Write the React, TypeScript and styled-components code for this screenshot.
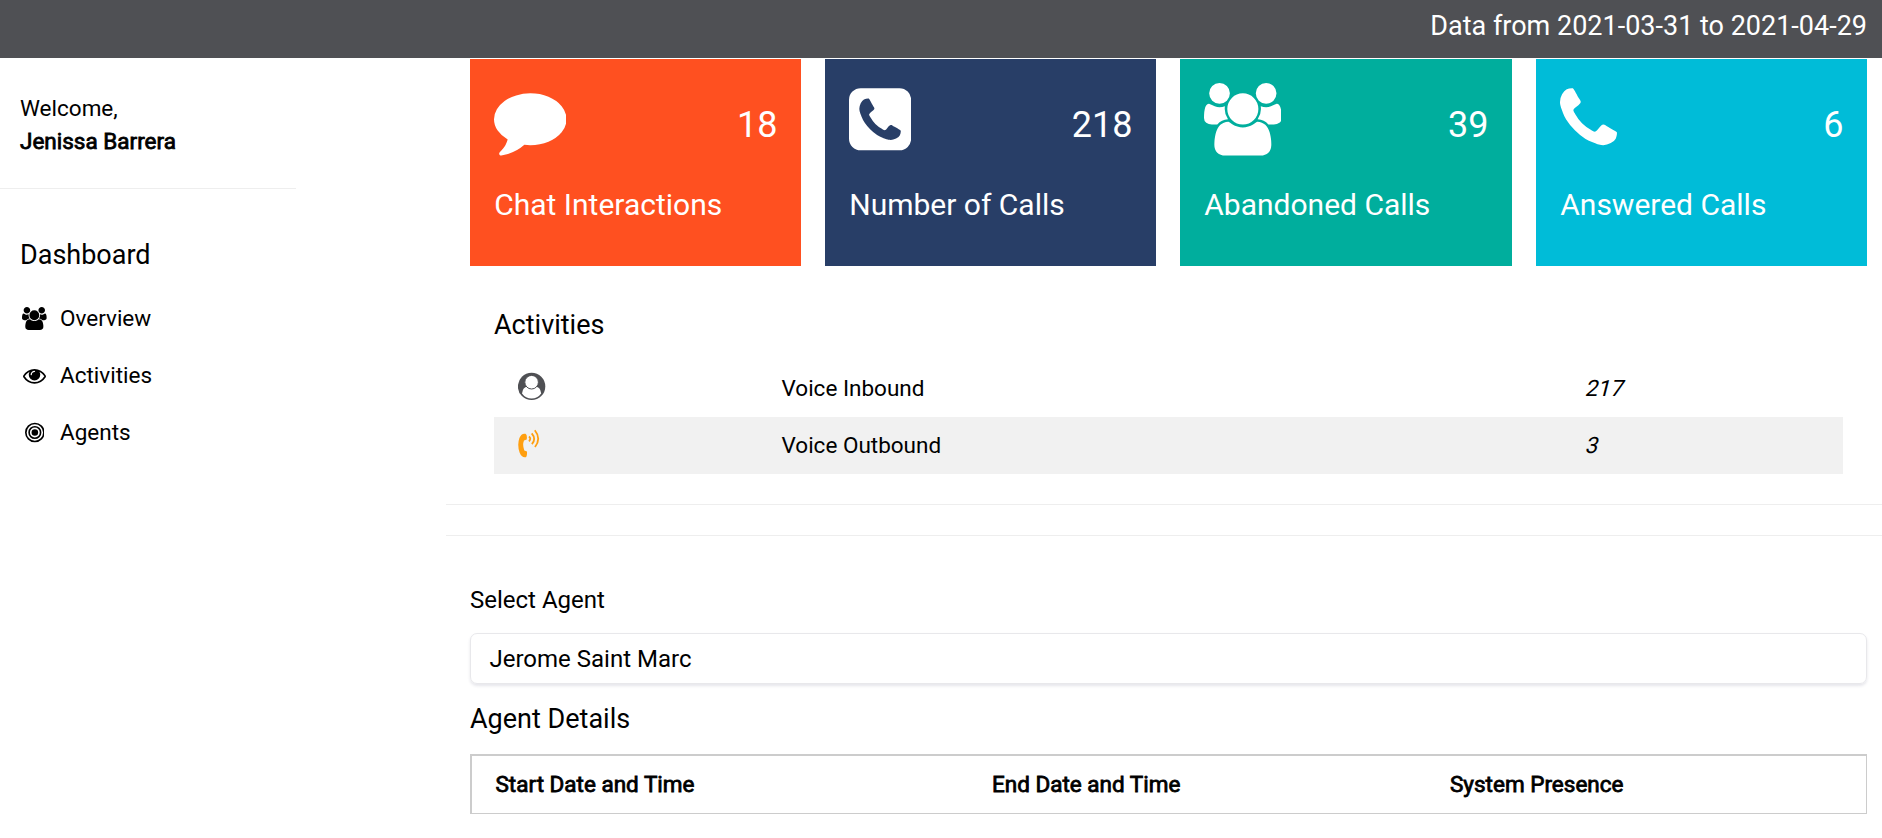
import React from "react";
import styled, { createGlobalStyle } from "styled-components";

const GlobalStyle = createGlobalStyle`
  *, *::before, *::after { box-sizing: border-box; }
  html, body { margin: 0; overflow: hidden; background: #fff; }
  body { font-family: Roboto, "Liberation Sans", sans-serif; font-size: 22.5px; line-height: 33.75px; color: #000; }
`;

const Page = styled.div`
  display: flex;
  flex-direction: column;
  height: 838px;
`;
const TopBar = styled.header`
  height: 58px;
  flex: none;
  background: #4f5054;
  color: #fff;
  font-size: 27px;
  line-height: 40px;
  padding: 6px 15px 0;
  text-align: right;
`;
const Body = styled.div`
  display: flex;
  flex: 1;
  min-height: 0;
`;
const Sidebar = styled.nav`
  width: 446px;
  flex: none;
`;
const Greeting = styled.div`
  width: 296px;
  height: 131px;
  padding: 34px 20px 0;
  line-height: 33px;
  border-bottom: 1px solid #eee;
`;
const Strong = styled.span`
  -webkit-text-stroke: 0.8px currentColor;
`;
const SideTitle = styled.h5`
  margin: 46px 20px 15px;
  font-size: 27px;
  line-height: 40px;
  font-weight: 400;
`;
const SideLink = styled.a`
  display: flex;
  align-items: center;
  height: 57px;
  padding-left: 19.5px;
  gap: 10.5px;
`;
const SideIcon = styled.span`
  display: flex;
  justify-content: center;
  width: 30px;
`;
const Main = styled.main`
  flex: 1;
  min-width: 0;
`;
const Cards = styled.section`
  display: grid;
  grid-template-columns: 331px 331px 332px 331px;
  gap: 24px;
  padding: 1px 15px 0 24px;
`;
const Card = styled.article<{ $color: string }>`
  height: 207px;
  background: ${(p) => p.$color};
  color: #fff;
  padding: 24px 23.5px 0 24.25px;
`;
const CardTop = styled.div`
  display: flex;
  justify-content: space-between;
  height: 99px;
  svg { margin-left: -0.75px; }
`;
const Count = styled.div`
  font-size: 36px;
  line-height: 54px;
  padding-top: 15px;
`;
const CardTitle = styled.h4`
  margin: 0;
  font-size: 30px;
  line-height: 45px;
  font-weight: 400;
`;
const Activities = styled.section`
  height: 239px;
  padding: 39px 39px 0 48px;
  border-bottom: 1px solid #eee;
`;
const Heading = styled.h5`
  margin: 0;
  font-size: 27px;
  line-height: 40px;
  font-weight: 400;
`;
const Table = styled.div`
  margin-top: 15px;
`;
const ActivityRow = styled.div<{ $shaded?: boolean }>`
  display: grid;
  grid-template-columns: 263.5px 800px 1fr;
  height: 57px;
  padding: 12px 0 0 24px;
  background: ${(p) => (p.$shaded ? "#f1f1f1" : "transparent")};
`;
const RowIcon = styled.div`
  height: 32px;
  svg { display: block; }
`;
const Slanted = styled.span`
  justify-self: start;
  transform: skewX(-14deg);
  transform-origin: 0 75%;
`;
const Spacer = styled.div`
  height: 31px;
  border-bottom: 1px solid #eee;
`;
const Agent = styled.section`
  padding: 47px 15px 0 24px;
`;
const Label = styled.div`
  font-size: 24px;
  line-height: 34px;
`;
const Select = styled.div`
  height: 51px;
  margin: 16px 0 15px;
  padding: 8px 18.5px;
  border: 1px solid #e8e8eb;
  border-radius: 7px;
  box-shadow: 0 2px 3px rgba(50, 50, 93, 0.12);
  font-size: 24px;
  line-height: 34px;
`;
const DetailHeader = styled.div`
  display: grid;
  grid-template-columns: 496.5px 458px 1fr;
  height: 60px;
  margin-top: 15px;
  padding: 12px 0 0 23.5px;
  border: 1px solid #ccc;
  border-top-width: 2px;
  border-left-width: 2px;
`;

type IconName = "comment" | "square" | "users" | "phone" | "eye";
const shapes: Record<IconName, { x?: number; width: number; d: string }> = {
  comment: {
    width: 1792,
    d: "M1792 896q0 174-120 321.5t-326 233-450 85.5q-70 0-145-8-198 175-460 242-49 14-114 22-17 2-30.5-9t-17.5-29v-1q-3-4-.5-12t2-10 4.5-9.5l6-9 7-8.5 8-9q7-8 31-34.5t34.5-38 31-39.5 32.5-51 27-59 26-76q-157-89-247.5-220t-90.5-281q0-130 71-248.5t191-204.5 286-136.5 348-50.5q244 0 450 85.5t326 233 120 321.5z",
  },
  square: {
    x: 128,
    width: 1536,
    d: "M1408 1193q0-11-2-16t-18-16.5-40.5-25-47.5-26.5-45.5-25-28.5-15q-5-3-19-13t-25-15-21-5q-15 0-36.5 20.5t-39.5 45-38.5 45-33.5 20.5q-7 0-16.5-3.5t-15.5-6.5-17-9.5-14-8.5q-99-55-170-126.5t-127-170.5q-2-3-8.5-14t-9.5-17-6.5-15.5-3.5-16.5q0-13 20.5-33.5t45-38.5 45-39.5 20.5-36.5q0-10-5-21t-15-25-13-19q-3-6-15-28.5t-25-45.5-26.5-47.5-25-40.5-16.5-18-16-2q-48 0-101 22-46 21-80 94.5t-34 130.5q0 16 2.5 34t5 30.5 9 33 10 29.5 12.5 33 11 30q60 164 216.5 320.5t320.5 216.5q6 2 30 11t33 12.5 29.5 10 33 9 30.5 5 34 2.5q57 0 130.5-34t94.5-80q22-53 22-101zm256-777v960q0 119-84.5 203.5t-203.5 84.5h-960q-119 0-203.5-84.5t-84.5-203.5v-960q0-119 84.5-203.5t203.5-84.5h960q119 0 203.5 84.5t84.5 203.5z",
  },
  users: {
    width: 1920,
    d: "M593 896q-162 5-265 128H194q-82 0-138-40.5T0 865q0-353 124-353 6 0 43.5 21t97.5 42.5T384 597q67 0 133-23-5 37-5 66 0 139 81 256zm1071 637q0 120-73 189.5t-194 69.5H523q-121 0-194-69.5T256 1533q0-53 3.5-103.5t14-109T300 1212t43-97.5 62-81 85.5-53.5T602 960q10 0 43 21.5t73 48 107 48 135 21.5 135-21.5 107-48 73-48 43-21.5q61 0 111.5 20t85.5 53.5 62 81 43 97.5 26.5 108.5 14 109 3.5 103.5zM640 256q0 106-75 181t-181 75-181-75-75-181 75-181T384 0t181 75 75 181zm704 384q0 159-112.5 271.5T960 1024 688.5 911.5 576 640t112.5-271.5T960 256t271.5 112.5T1344 640zm576 225q0 78-56 118.5t-138 40.5h-134q-103-123-265-128 81-117 81-256 0-29-5-66 66 23 133 23 59 0 119-21.5t97.5-42.5 43.5-21q124 0 124 353zm-128-609q0 106-75 181t-181 75-181-75-75-181 75-181 181-75 181 75 75 181z",
  },
  phone: {
    width: 1792,
    d: "M1408 1240q0 27-10 70.5t-21 68.5q-21 50-122 106-94 51-186 51-27 0-52.5-3.5t-57.5-12.5-47.5-14.5-55.5-20.5-49-18q-98-35-175-83-128-79-264.5-215.5t-215.5-264.5q-48-77-83-175-3-9-18-49t-20.5-55.5-14.5-47.5-12.5-57.5-3.5-52.5q0-92 51-186 56-101 106-122 25-11 68.5-21t70.5-10q14 0 21 3 18 6 53 76 11 19 30 54t35 63.5 31 53.5q3 4 17.5 25t21.5 35.5 7 28.5q0 20-28.5 50t-62 55-62 53-28.5 46q0 9 5 22.5t8.5 20.5 14 24 11.5 19q76 137 174 235t235 174q2 1 19 11.5t24 14 20.5 8.5 22.5 5q18 0 46-28.5t53-62 55-62 50-28.5q14 0 28.5 7t35.5 21.5 25 17.5q25 15 53.5 31t63.5 35 54 30q70 35 76 53 3 7 3 21z",
  },
  eye: {
    width: 1792,
    d: "M1664 960q-152-236-381-353 61 104 61 225 0 185-131.5 316.5t-316.5 131.5-316.5-131.5-131.5-316.5q0-121 61-225-229 117-381 353 133 205 333.5 326.5t434.5 121.5 434.5-121.5 333.5-326.5zm-720-384q0-20-14-34t-34-14q-125 0-214.5 89.5t-89.5 214.5q0 20 14 34t34 14 34-14 14-34q0-86 61-147t147-61q20 0 34-14t14-34zm848 384q0 34-20 69-140 230-376.5 368.5t-499.5 138.5-499.5-139-376.5-368q-20-35-20-69t20-69q140-229 376.5-368t499.5-139 499.5 139 376.5 368q20 35 20 69z",
  },
};

function Icon({ name, size }: { name: IconName; size: number }) {
  const { x = 0, width, d } = shapes[name];
  return (
    <svg width={(size * width) / 1792} height={size} viewBox={`${x} 0 ${width} 1792`} fill="currentColor">
      <path d={d} />
    </svg>
  );
}

function TargetIcon() {
  return (
    <svg width="19.7" height="23" viewBox="0 0 1536 1792" fill="none" stroke="currentColor" strokeWidth="128">
      <circle cx="768" cy="896" r="256" fill="currentColor" stroke="none" />
      <circle cx="768" cy="896" r="448" />
      <circle cx="768" cy="896" r="704" />
    </svg>
  );
}

function PersonIcon() {
  return (
    <svg width="28" height="30" viewBox="0 0 28 30">
      <circle cx="13.6" cy="14.4" r="13.7" fill="#4f5054" />
      <path d="M4 21.4Q4.9 14.8 9.3 14.8Q13.6 18 17.9 14.8Q22.3 14.8 23.2 21.4Q19.5 26.5 13.6 26.5Q7.7 26.5 4 21.4Z" fill="#fff" />
      <circle cx="13.6" cy="10.2" r="6.8" fill="#fff" stroke="#4f5054" strokeWidth="1" />
    </svg>
  );
}

function CallIcon() {
  return (
    <svg width="24" height="30" viewBox="0 0 24 30" fill="none" stroke="#ff9f10">
      <path d="M7.5 4.8Q3.5 4 1.4 9Q-1 16 1.6 23.5Q3.7 29 7.8 28.2Q9.2 27.5 9 22.5L6.3 21.5Q4.2 16 6 11.5L8.7 10.5Q9.5 6 7.5 4.8Z" fill="#ff9f10" stroke="none" />
      <path d="M11 7.5Q13.5 9.8 11 12.3M13.7 4.3Q18.5 9.8 13.9 15.2M16.8 1.2Q23.5 9.5 17 18" strokeWidth="1.8" />
    </svg>
  );
}

const cards: { icon: IconName; count: number; title: string; color: string }[] = [
  { icon: "comment", count: 18, title: "Chat Interactions", color: "#ff5020" },
  { icon: "square", count: 218, title: "Number of Calls", color: "#283e67" },
  { icon: "users", count: 39, title: "Abandoned Calls", color: "#00ae9d" },
  { icon: "phone", count: 6, title: "Answered Calls", color: "#00bcd8" },
];

export default function App() {
  return (
    <Page>
      <GlobalStyle />
      <TopBar>Data from 2021-03-31 to 2021-04-29</TopBar>
      <Body>
        <Sidebar>
          <Greeting>
            <div>Welcome,</div>
            <Strong>Jenissa Barrera</Strong>
          </Greeting>
          <SideTitle>Dashboard</SideTitle>
          <SideLink>
            <SideIcon><Icon name="users" size={23} /></SideIcon>
            Overview
          </SideLink>
          <SideLink>
            <SideIcon><Icon name="eye" size={23} /></SideIcon>
            Activities
          </SideLink>
          <SideLink>
            <SideIcon><TargetIcon /></SideIcon>
            Agents
          </SideLink>
        </Sidebar>
        <Main>
          <Cards>
            {cards.map((c) => (
              <Card key={c.title} $color={c.color}>
                <CardTop>
                  <Icon name={c.icon} size={72.5} />
                  <Count>{c.count}</Count>
                </CardTop>
                <CardTitle>{c.title}</CardTitle>
              </Card>
            ))}
          </Cards>
          <Activities>
            <Heading>Activities</Heading>
            <Table>
              <ActivityRow>
                <RowIcon><PersonIcon /></RowIcon>
                <span>Voice Inbound</span>
                <Slanted>217</Slanted>
              </ActivityRow>
              <ActivityRow $shaded>
                <RowIcon><CallIcon /></RowIcon>
                <span>Voice Outbound</span>
                <Slanted>3</Slanted>
              </ActivityRow>
            </Table>
          </Activities>
          <Spacer />
          <Agent>
            <Label>Select Agent</Label>
            <Select>Jerome Saint Marc</Select>
            <Heading>Agent Details</Heading>
            <DetailHeader>
              <Strong>Start Date and Time</Strong>
              <Strong>End Date and Time</Strong>
              <Strong>System Presence</Strong>
            </DetailHeader>
          </Agent>
        </Main>
      </Body>
    </Page>
  );
}
